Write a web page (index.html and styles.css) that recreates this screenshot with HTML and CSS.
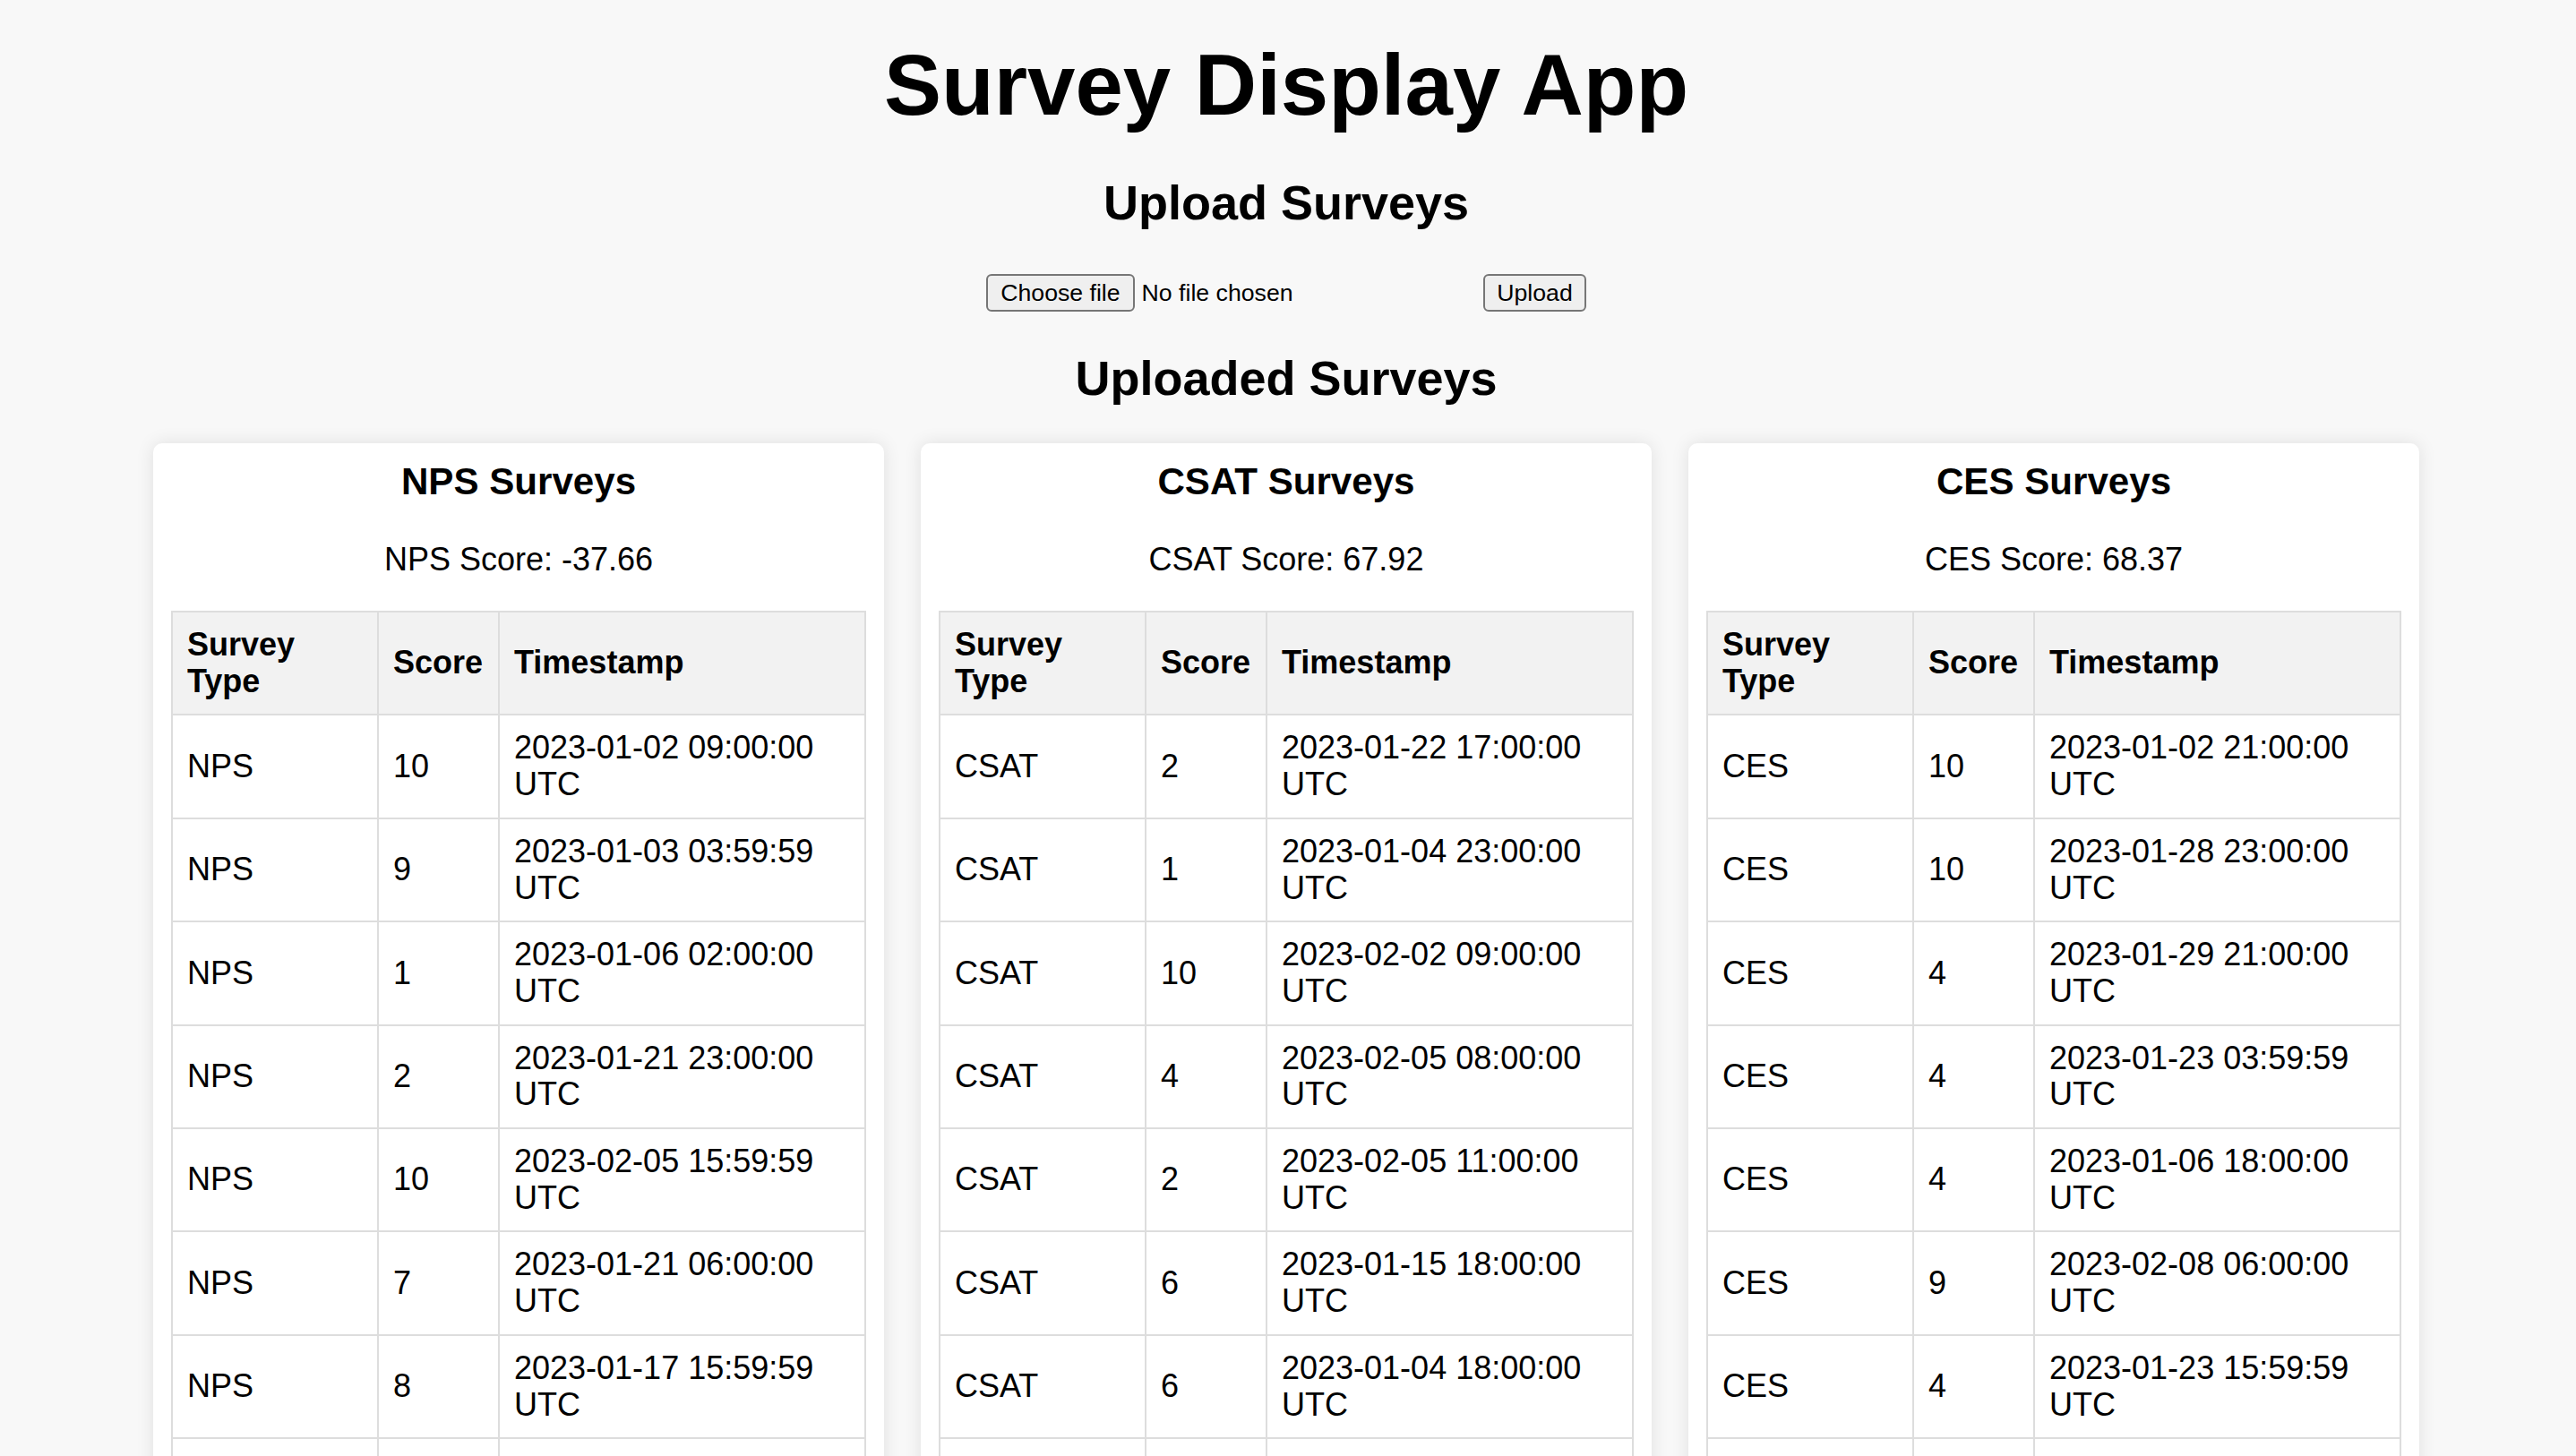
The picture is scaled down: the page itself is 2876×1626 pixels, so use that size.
FILE: index.html
```html
<!DOCTYPE html>
<html lang="en">
<head>
<meta charset="utf-8">
<title>Survey Display App</title>
<link rel="stylesheet" href="styles.css">
</head>
<body>
<div class="page">
  <h1 class="title">Survey Display App</h1>
  <h2 class="section-title upload-title">Upload Surveys</h2>
  <form class="upload-form">
    <label class="file-picker">
      <input type="file" class="file-native">
      <span class="file-btn">Choose file</span>
      <span class="file-name">No file chosen</span>
    </label>
    <button type="button" class="upload-btn">Upload</button>
  </form>
  <h2 class="section-title list-title">Uploaded Surveys</h2>
  <div class="cards">
    <section class="card">
      <h3 class="card-title">NPS Surveys</h3>
      <p class="score">NPS Score: -37.66</p>
      <table class="survey-table">
        <thead><tr><th class="col-type">Survey Type</th><th class="col-score">Score</th><th>Timestamp</th></tr></thead>
        <tbody>
          <tr><td>NPS</td><td>10</td><td>2023-01-02 09:00:00 UTC</td></tr>
          <tr><td>NPS</td><td>9</td><td>2023-01-03 03:59:59 UTC</td></tr>
          <tr><td>NPS</td><td>1</td><td>2023-01-06 02:00:00 UTC</td></tr>
          <tr><td>NPS</td><td>2</td><td>2023-01-21 23:00:00 UTC</td></tr>
          <tr><td>NPS</td><td>10</td><td>2023-02-05 15:59:59 UTC</td></tr>
          <tr><td>NPS</td><td>7</td><td>2023-01-21 06:00:00 UTC</td></tr>
          <tr><td>NPS</td><td>8</td><td>2023-01-17 15:59:59 UTC</td></tr>
          <tr><td>NPS</td><td>3</td><td>2023-01-12 10:00:00 UTC</td></tr>
          <tr><td>NPS</td><td>5</td><td>2023-02-01 14:00:00 UTC</td></tr>
        </tbody>
      </table>
    </section>
    <section class="card">
      <h3 class="card-title">CSAT Surveys</h3>
      <p class="score">CSAT Score: 67.92</p>
      <table class="survey-table">
        <thead><tr><th class="col-type">Survey Type</th><th class="col-score">Score</th><th>Timestamp</th></tr></thead>
        <tbody>
          <tr><td>CSAT</td><td>2</td><td>2023-01-22 17:00:00 UTC</td></tr>
          <tr><td>CSAT</td><td>1</td><td>2023-01-04 23:00:00 UTC</td></tr>
          <tr><td>CSAT</td><td>10</td><td>2023-02-02 09:00:00 UTC</td></tr>
          <tr><td>CSAT</td><td>4</td><td>2023-02-05 08:00:00 UTC</td></tr>
          <tr><td>CSAT</td><td>2</td><td>2023-02-05 11:00:00 UTC</td></tr>
          <tr><td>CSAT</td><td>6</td><td>2023-01-15 18:00:00 UTC</td></tr>
          <tr><td>CSAT</td><td>6</td><td>2023-01-04 18:00:00 UTC</td></tr>
          <tr><td>CSAT</td><td>9</td><td>2023-01-19 07:00:00 UTC</td></tr>
          <tr><td>CSAT</td><td>8</td><td>2023-02-03 12:00:00 UTC</td></tr>
        </tbody>
      </table>
    </section>
    <section class="card">
      <h3 class="card-title">CES Surveys</h3>
      <p class="score">CES Score: 68.37</p>
      <table class="survey-table">
        <thead><tr><th class="col-type">Survey Type</th><th class="col-score">Score</th><th>Timestamp</th></tr></thead>
        <tbody>
          <tr><td>CES</td><td>10</td><td>2023-01-02 21:00:00 UTC</td></tr>
          <tr><td>CES</td><td>10</td><td>2023-01-28 23:00:00 UTC</td></tr>
          <tr><td>CES</td><td>4</td><td>2023-01-29 21:00:00 UTC</td></tr>
          <tr><td>CES</td><td>4</td><td>2023-01-23 03:59:59 UTC</td></tr>
          <tr><td>CES</td><td>4</td><td>2023-01-06 18:00:00 UTC</td></tr>
          <tr><td>CES</td><td>9</td><td>2023-02-08 06:00:00 UTC</td></tr>
          <tr><td>CES</td><td>4</td><td>2023-01-23 15:59:59 UTC</td></tr>
          <tr><td>CES</td><td>7</td><td>2023-01-11 09:00:00 UTC</td></tr>
          <tr><td>CES</td><td>2</td><td>2023-01-30 16:00:00 UTC</td></tr>
        </tbody>
      </table>
    </section>
  </div>
</div>
</body>
</html>
```

FILE: styles.css
```css
html, body {
  margin: 0;
  padding: 0;
  background: #f8f8f8;
  color: #000;
  font-family: "Liberation Sans", Arial, Helvetica, sans-serif;
  font-size: 36px;
}

.page {
  padding: 40px 4px 0 0;
  text-align: center;
}

.title {
  margin: 0;
  font-size: 96px;
  font-weight: bold;
  line-height: normal;
}

.section-title {
  font-size: 54px;
  font-weight: bold;
  line-height: normal;
  margin: 0;
}

.upload-title {
  margin-top: 45px;
}

.upload-form {
  display: flex;
  justify-content: center;
  align-items: center;
  gap: 8px;
  margin: 49px 0 0;
  height: 42px;
}

.file-picker {
  width: 547px;
  display: flex;
  align-items: center;
  gap: 8px;
  font-size: 26.67px;
  color: #000;
  text-align: left;
  cursor: default;
}

.file-native {
  display: none;
}

.file-btn,
.upload-btn {
  box-sizing: border-box;
  display: inline-flex;
  align-items: center;
  font-family: "Liberation Sans", Arial, sans-serif;
  font-size: 26.67px;
  height: 42px;
  border: 2px solid #767676;
  border-radius: 6px;
  background: #efefef;
  color: #000;
}

.file-btn {
  padding: 0 14px;
}

.upload-btn {
  padding: 0 13px;
}

.file-name {
  white-space: nowrap;
}

.list-title {
  margin-top: 43px;
}

.cards {
  width: 2530px;
  margin: 42px auto 0;
  display: grid;
  grid-template-columns: repeat(3, 1fr);
  gap: 41px;
  align-items: start;
}

.card {
  background: #fff;
  border-radius: 10px;
  box-shadow: 0 0 20px rgba(0, 0, 0, 0.1);
  padding: 19px 20px 20px;
}

.card-title {
  margin: 0 0 42px;
  font-size: 42.12px;
  font-weight: bold;
  line-height: normal;
}

.score {
  margin: 0 0 36px;
  font-size: 36px;
  line-height: normal;
}

.survey-table {
  width: 100%;
  border-collapse: collapse;
  table-layout: fixed;
  text-align: left;
}

.survey-table th,
.survey-table td {
  border: 2px solid #ddd;
  padding: 16px;
  line-height: 40.7px;
  font-size: 36px;
  vertical-align: middle;
}

.survey-table th {
  background: #f2f2f2;
  font-weight: bold;
}

.survey-table td {
  background: #fff;
}

.survey-table .col-type {
  width: 196px;
}

.survey-table .col-score {
  width: 101px;
}
```
